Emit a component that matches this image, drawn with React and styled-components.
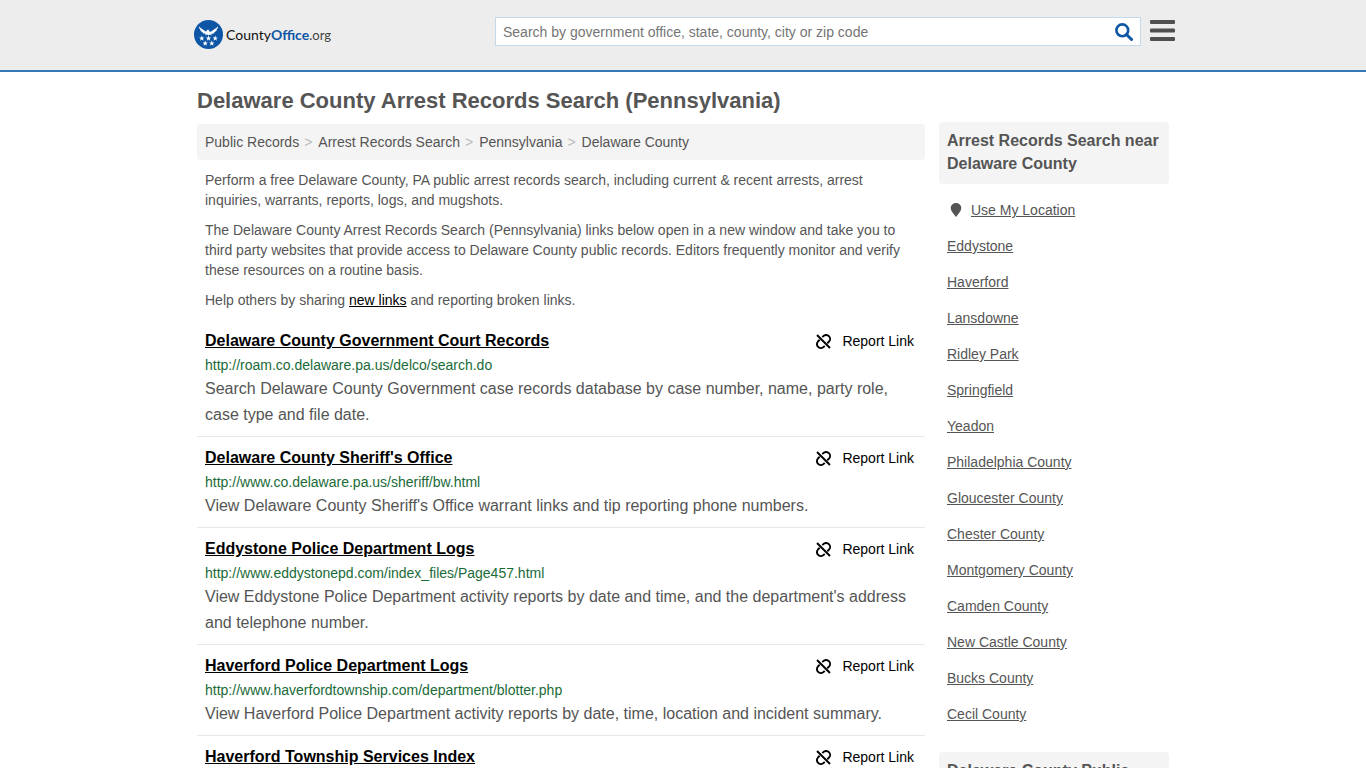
import React from 'react';
import styled, { createGlobalStyle, ThemeProvider } from 'styled-components';

const theme = {
    text: '#555',
    brand: '#0d55a5',
    line: '#337ab7',
    panel: '#f4f4f4',
    url: '#1a6b38'
};

const GlobalStyle = createGlobalStyle`
  * {
    box-sizing: border-box;
  }

  body {
    margin: 0;
    background: #fff;
    color: ${props => props.theme.text};
    font-family: "Liberation Sans", Arial, Helvetica, sans-serif;
    font-size: 14px;
    line-height: 20px;
  }
`;

const Header = styled.header`
  background: #ededed;
  border-bottom: 2px solid ${props => props.theme.line};
`;

const HeaderInner = styled.div`
  display: flex;
  justify-content: space-between;
  max-width: 984px;
  height: 70px;
  margin: 0 auto;
  padding-left: 3px;
`;

const LogoLink = styled.a`
  display: flex;
  align-items: center;
  gap: 3px;
  height: 70px;
  color: #111;
  font-family: Lato, "Liberation Sans", sans-serif;
  font-size: 14px;
  text-decoration: none;

  svg {
    margin-bottom: 2px;
  }

  strong {
    color: ${props => props.theme.brand};
    font-weight: 700;
  }

  small {
    color: #444;
    font-size: 13px;
    font-weight: 400;
  }
`;

const HeaderTools = styled.div`
  display: flex;
  flex: 0 1 680px;
  align-items: flex-start;
  gap: 9px;
  padding-top: 17px;
`;

const SearchForm = styled.form`
  display: flex;
  flex: 1;
  height: 29px;
  background: #fff;
  border: 1px solid #c3d9ec;
`;

const SearchInput = styled.input`
  flex: 1;
  min-width: 0;
  padding: 0 7px;
  border: 0;
  background: none;
  color: ${props => props.theme.text};
  font: inherit;
  outline: none;

  &::placeholder {
    color: #757575;
    opacity: 1;
  }
`;

const IconButton = styled.button`
  display: flex;
  align-items: center;
  justify-content: center;
  padding: ${props => props.$pad || '0'};
  border: 0;
  background: none;
  color: ${props => props.theme.brand};
  cursor: pointer;
`;

const Page = styled.div`
  max-width: 972px;
  margin: 0 auto;
  padding-top: 15px;
`;

const Title = styled.h1`
  margin: 0 0 7px;
  font-size: 22px;
  line-height: 28px;
`;

const Columns = styled.div`
  display: grid;
  grid-template-columns: minmax(0, 1fr) 230px;
  gap: 14px;
`;

const Main = styled.main`
  padding-top: 2px;
`;

const Breadcrumbs = styled.nav`
  margin-bottom: 10px;
  padding: 8px;
  border-radius: 4px;
  background: ${props => props.theme.panel};

  ol {
    display: flex;
    margin: 0;
    padding: 0;
    list-style: none;
  }

  li + li::before {
    content: '>';
    padding: 0 6px 0 5px;
    color: #bbb;
  }

  a {
    color: inherit;
    text-decoration: none;
  }
`;

const Paragraph = styled.p`
  margin: 0 0 10px;
  padding: 0 8px;

  a {
    color: #000;
  }
`;

const Results = styled.ul`
  margin: 0;
  padding: 0;
  list-style: none;
`;

const Result = styled.li`
  padding: 9px 8px 8px;
  border-bottom: 1px solid #e8e8e8;
`;

const ResultHead = styled.div`
  display: flex;
  justify-content: space-between;
  margin-bottom: 2px;
  padding-right: 3px;
`;

const ResultTitle = styled.h2`
  margin: 0;
  font-size: 16px;
  line-height: 24px;

  a {
    color: #000;
  }
`;

const ReportButton = styled.button`
  display: flex;
  align-items: center;
  gap: 11px;
  padding: 0;
  border: 0;
  background: none;
  color: #000;
  font: inherit;
  cursor: pointer;
`;

const ResultUrl = styled.div`
  margin-bottom: 1px;
  color: ${props => props.theme.url};
`;

const ResultText = styled.div`
  font-size: 16px;
  line-height: 26px;
`;

const SidebarTitle = styled.h2`
  margin: 0 0 8px;
  padding: 7px 8px 9px;
  border-radius: 4px;
  background: ${props => props.theme.panel};
  font-size: 16px;
  line-height: 23px;
`;

const SidebarList = styled.ul`
  margin: 0 0 20px;
  padding: 0 8px;
  line-height: 36px;
  list-style: none;

  li {
    display: flex;
    align-items: center;
  }

  svg {
    margin: 0 8px 0 2px;
  }

  a {
    color: inherit;
  }
`;

const crumbs = ['Public Records', 'Arrest Records Search', 'Pennsylvania', 'Delaware County'];

const results = [
    {
        title: 'Delaware County Government Court Records',
        url: 'http://roam.co.delaware.pa.us/delco/search.do',
        text: 'Search Delaware County Government case records database by case number, name, party role, case type and file date.'
    },
    {
        title: "Delaware County Sheriff's Office",
        url: 'http://www.co.delaware.pa.us/sheriff/bw.html',
        text: "View Delaware County Sheriff's Office warrant links and tip reporting phone numbers."
    },
    {
        title: 'Eddystone Police Department Logs',
        url: 'http://www.eddystonepd.com/index_files/Page457.html',
        text: "View Eddystone Police Department activity reports by date and time, and the department's address and telephone number."
    },
    {
        title: 'Haverford Police Department Logs',
        url: 'http://www.haverfordtownship.com/department/blotter.php',
        text: 'View Haverford Police Department activity reports by date, time, location and incident summary.'
    },
    {
        title: 'Haverford Township Services Index'
    }
];

const places = [
    'Eddystone',
    'Haverford',
    'Lansdowne',
    'Ridley Park',
    'Springfield',
    'Yeadon',
    'Philadelphia County',
    'Gloucester County',
    'Chester County',
    'Montgomery County',
    'Camden County',
    'New Castle County',
    'Bucks County',
    'Cecil County'
];

const stars = [[7.8, 18.4], [14.5, 18.4], [21.2, 18.4], [11.2, 23.4], [17.8, 23.4]];

const LogoMark = () => (
    <svg width="29" height="29" viewBox="0 0 29 29" aria-hidden="true">
        <circle cx="14.5" cy="14.5" r="14.5" fill="#0d55a5" />
        <path
            fill="#fff"
            d="M4.800 6.200c1.900 2.300 4.800 3.200 6.800 5.400l1-.6c.2-1.200 1.500-1.700 2.600-1.100l-.6.900 1.600 1 1-.2c2-2.200 5.100-3.100 7-5.400-.2 1.600-.9 2.900-1.900 3.900l.6.200c-.8 1.100-1.800 1.800-2.800 2.200l.3.400c-1.200.7-2.500.8-3.400 1l1.200 1.500-2.500-.8-1.200.9-1.200-.9-2.500.8 1.200-1.500c-.9-.2-2.200-.3-3.400-1l.3-.4c-1-.4-2-1.100-2.800-2.200l.6-.2c-1-1-1.700-2.300-1.900-3.900z"
        />
        {stars.map(([x, y]) => (
            <path
                key={`${x}-${y}`}
                fill="#fff"
                transform={`translate(${x} ${y}) scale(2.8)`}
                d="M0-1 .26-.34.95-.31.41.14.59.81 0 .43-.59.81-.41.14-.95-.31-.26-.34z"
            />
        ))}
    </svg>
);

const SearchIcon = () => (
    <svg width="18" height="18" viewBox="0 0 18 18" fill="none" stroke="currentColor" aria-hidden="true">
        <circle cx="7.300" cy="7.300" r="5.900" strokeWidth="2.600" />
        <path d="M11.500 11.500 16.500 16.500" strokeWidth="3" strokeLinecap="round" />
    </svg>
);

const MenuIcon = () => (
    <svg width="25" height="21" viewBox="0 0 25 21" fill="#4f4f4f" aria-hidden="true">
        <rect width="25" height="4" rx="1" />
        <rect y="8.500" width="25" height="4" rx="1" />
        <rect y="17" width="25" height="4" rx="1" />
    </svg>
);

const UnlinkIcon = () => (
    <svg width="15" height="15" viewBox="0 0 15 15" fill="none" stroke="#000" strokeWidth="1.900" aria-hidden="true">
        <path d="M1 1l13 13" />
        <path d="M6.300 3.100l1-1a3.900 3.900 0 0 1 5.600 5.600l-1.600 1.500" />
        <path d="M3.700 5.800L2.100 7.300a3.900 3.900 0 0 0 5.600 5.600l1-1" />
    </svg>
);

const PinIcon = () => (
    <svg width="14" height="14" viewBox="0 0 14 14" fill="#555" aria-hidden="true">
        <path d="M7 0a5.300 5 0 0 1 5.300 5c0 3-3 6.200-5.300 9-2.300-2.800-5.300-6-5.300-9a5.300 5 0 0 1 5.300-5z" />
    </svg>
);

const ResultItem = ({ title, url, text }) => (
    <Result>
        <ResultHead>
            <ResultTitle><a href="#result">{title}</a></ResultTitle>
            <ReportButton type="button"><UnlinkIcon />Report Link</ReportButton>
        </ResultHead>
        {url && <ResultUrl>{url}</ResultUrl>}
        {text && <ResultText>{text}</ResultText>}
    </Result>
);

const App = () => (
    <ThemeProvider theme={theme}>
        <GlobalStyle />

        <Header>
            <HeaderInner>
                <LogoLink href="#home">
                    <LogoMark />
                    <span>County<strong>Office</strong><small>.org</small></span>
                </LogoLink>
                <HeaderTools>
                    <SearchForm onSubmit={e => e.preventDefault()}>
                        <SearchInput
                            type="text"
                            aria-label="Search"
                            placeholder="Search by government office, state, county, city or zip code"
                        />
                        <IconButton type="submit" aria-label="Submit search" $pad="1px 7px 0"><SearchIcon /></IconButton>
                    </SearchForm>
                    <IconButton type="button" aria-label="Menu" $pad="3px 0 0"><MenuIcon /></IconButton>
                </HeaderTools>
            </HeaderInner>
        </Header>

        <Page>
            <Title>Delaware County Arrest Records Search (Pennsylvania)</Title>
            <Columns>
                <Main>
                    <Breadcrumbs aria-label="Breadcrumb">
                        <ol>
                            {crumbs.map(crumb => <li key={crumb}><a href="#crumb">{crumb}</a></li>)}
                        </ol>
                    </Breadcrumbs>
                    <Paragraph>
                        Perform a free Delaware County, PA public arrest records search, including current &amp; recent
                        arrests, arrest inquiries, warrants, reports, logs, and mugshots.
                    </Paragraph>
                    <Paragraph>
                        The Delaware County Arrest Records Search (Pennsylvania) links below open in a new window and
                        take you to third party websites that provide access to Delaware County public records. Editors
                        frequently monitor and verify these resources on a routine basis.
                    </Paragraph>
                    <Paragraph>
                        Help others by sharing <a href="#new-links">new links</a> and reporting broken links.
                    </Paragraph>
                    <Results>
                        {results.map(result => <ResultItem key={result.title} {...result} />)}
                    </Results>
                </Main>

                <aside>
                    <SidebarTitle>Arrest Records Search near Delaware County</SidebarTitle>
                    <SidebarList>
                        <li><PinIcon /><a href="#location">Use My Location</a></li>
                        {places.map(place => <li key={place}><a href="#place">{place}</a></li>)}
                    </SidebarList>
                    <SidebarTitle>Delaware County Public Records</SidebarTitle>
                </aside>
            </Columns>
        </Page>
    </ThemeProvider>
);

export default App;
